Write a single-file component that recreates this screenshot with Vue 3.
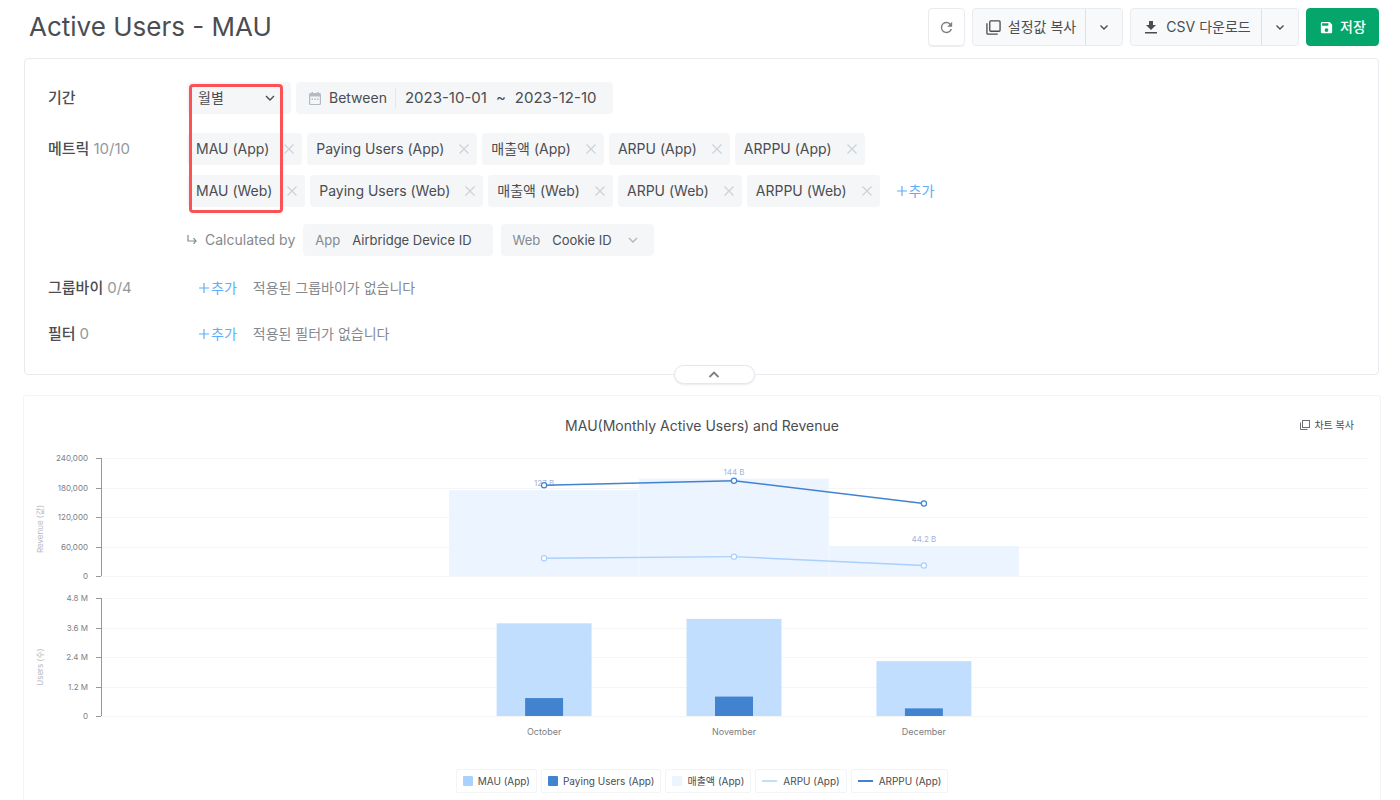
<template>
  <div class="page">
    <header class="top-bar">
      <h1 class="page-title">Active Users - MAU</h1>

      <div class="actions">
        <button type="button" class="btn btn-refresh" aria-label="새로고침">
          <svg width="17" height="17" viewBox="0 0 24 24">
            <path
              fill="#7a7f84"
              d="M17.65 6.35A7.96 7.96 0 0 0 12 4a8 8 0 1 0 7.73 10h-2.08A6 6 0 1 1 12 6c1.66 0 3.14.69 4.22 1.78L13 11h7V4z"
            />
          </svg>
        </button>

        <div class="btn-group">
          <button type="button" class="btn-main copy-main">
            <svg width="15" height="15" viewBox="0 0 16 16" fill="none" stroke="#4a4d51">
              <rect x="4" y="1" width="11" height="11" rx="1" stroke-width="1.4" />
              <path d="M1 3.5V14a1 1 0 0 0 1 1h10.5" stroke-width="1.4" />
            </svg>
            설정값 복사
          </button>
          <button type="button" class="btn-arrow" aria-label="설정값 복사 옵션">
            <svg width="10" height="10" viewBox="0 0 10 10" fill="none" stroke="#4a4d51">
              <path d="M1.5 3.5 5 7l3.5-3.5" stroke-width="1.4" />
            </svg>
          </button>
        </div>

        <div class="btn-group">
          <button type="button" class="btn-main csv-main">
            <svg width="12" height="14" viewBox="0 0 12 14" fill="#4a4d51">
              <path d="M4 1h4v4h3L6 10 1 5h3zM0 12h12v1.5H0z" />
            </svg>
            CSV 다운로드
          </button>
          <button type="button" class="btn-arrow" aria-label="CSV 다운로드 옵션">
            <svg width="10" height="10" viewBox="0 0 10 10" fill="none" stroke="#4a4d51">
              <path d="M1.5 3.5 5 7l3.5-3.5" stroke-width="1.4" />
            </svg>
          </button>
        </div>

        <button type="button" class="btn btn-save">
          <svg width="15" height="15" viewBox="0 0 24 24" fill="#fff">
            <path
              d="M17 3H5a2 2 0 0 0-2 2v14a2 2 0 0 0 2 2h14a2 2 0 0 0 2-2V7zm-5 16a3 3 0 1 1 0-6 3 3 0 0 1 0 6zm3-10H5V5h10z"
            />
          </svg>
          저장
        </button>
      </div>
    </header>

    <section class="filter-box">
      <div class="row">
        <label class="row-label" for="period">기간</label>
        <div class="row-body">
          <div class="period">
            <select id="period" v-model="period">
              <option>월별</option>
              <option>주별</option>
              <option>일별</option>
            </select>
            <svg class="select-arrow" width="10" height="10" viewBox="0 0 10 10" fill="none" stroke="#4a4d51">
              <path d="M1 3l4 4 4-4" stroke-width="1.4" />
            </svg>
          </div>
          <button type="button" class="date-range">
            <svg width="12" height="13" viewBox="0 0 12 13" fill="#b4bbc4">
              <path d="M2.5 0H4v2H2.5zM8 0h1.5v2H8z" />
              <path
                fill-rule="evenodd"
                d="M1.5 1h9A1.5 1.5 0 0 1 12 2.5v9a1.5 1.5 0 0 1-1.5 1.5h-9A1.5 1.5 0 0 1 0 11.5v-9A1.5 1.5 0 0 1 1.5 1zM1.2 4.5v7a.4.4 0 0 0 .4.4h8.8a.4.4 0 0 0 .4-.4v-7z"
              />
              <path d="M2.5 6.5H4V8H2.5zM5.25 6.5h1.5V8h-1.5zM8 6.5h1.5V8H8z" />
            </svg>
            <span class="operator">Between</span>
            <span class="dates">
              <span>{{ range.from }}</span>
              <span>~</span>
              <span>{{ range.to }}</span>
            </span>
          </button>
        </div>
      </div>

      <div class="row row-metrics">
        <div class="row-label">메트릭 <span class="count">10/10</span></div>
        <div class="row-stack">
          <div v-for="(line, i) in metrics" :key="i" class="row-body">
            <span v-for="name in line" :key="name" class="chip">
              {{ name }}
              <button type="button" class="chip-remove" :aria-label="`${name} 삭제`">
                <svg width="10" height="10" viewBox="0 0 10 10" stroke="#cbd2d9">
                  <path d="M.5.5l9 9M9.5.5l-9 9" stroke-width="1.2" />
                </svg>
              </button>
            </span>
            <button v-if="i === metrics.length - 1" type="button" class="add-btn">
              <svg width="10" height="10" viewBox="0 0 10 10" stroke="#5eaefb">
                <path d="M5 0v10M0 5h10" stroke-width="1.2" />
              </svg>
              추가
            </button>
          </div>

          <div class="row-body calculated">
            <svg width="10" height="10" viewBox="0 0 10 10" fill="none" stroke="#85898e">
              <path d="M1 0v6h8M6.5 3.2 9 6 6.5 8.8" stroke-width="1.2" />
            </svg>
            <span class="calc-text">Calculated by</span>
            <div class="id-box id-app">
              <span class="id-kind">App</span>
              <span>Airbridge Device ID</span>
            </div>
            <div class="id-box id-web">
              <label class="id-kind" for="web-id">Web</label>
              <select id="web-id">
                <option>Cookie ID</option>
              </select>
              <svg class="select-arrow" width="10" height="10" viewBox="0 0 10 10" fill="none" stroke="#b0b7bf">
                <path d="M1 3l4 4 4-4" stroke-width="1.4" />
              </svg>
            </div>
          </div>
        </div>
      </div>

      <div v-for="item in emptyRows" :key="item.label" class="row row-empty">
        <div class="row-label">
          {{ item.label }} <span class="count">{{ item.count }}</span>
        </div>
        <div class="row-body">
          <button type="button" class="add-btn">
            <svg width="10" height="10" viewBox="0 0 10 10" stroke="#5eaefb">
              <path d="M5 0v10M0 5h10" stroke-width="1.2" />
            </svg>
            추가
          </button>
          <span class="empty-text">{{ item.text }}</span>
        </div>
      </div>

      <div class="highlight"></div>

      <button type="button" class="collapse" aria-label="접기">
        <svg width="12" height="8" viewBox="0 0 12 8" fill="none" stroke="#7a7f85">
          <path d="M1.5 6 6 1.5 10.5 6" stroke-width="1.8" />
        </svg>
      </button>
    </section>

    <section class="chart-card">
      <div class="chart-head">
        <h2 class="chart-title">MAU(Monthly Active Users) and Revenue</h2>
        <button type="button" class="chart-copy">
          <svg width="10" height="10" viewBox="0 0 10 10" fill="none" stroke="#6a6e73">
            <rect x="2.5" y=".5" width="7" height="7" />
            <path d="M.5 2.5v7h7" />
          </svg>
          차트 복사
        </button>
      </div>

      <div class="plot">
        <svg width="100%" height="290" class="plot-svg">
          <g v-for="panel in panels" :key="panel.title">
            <text
              class="axis-title"
              :transform="`translate(-58 ${panel.titleY}) rotate(-90)`"
              text-anchor="middle"
            >
              {{ panel.title }}
            </text>
            <g v-for="(tick, i) in panel.ticks" :key="tick">
              <line class="grid-line" x1="0" x2="100%" :y1="tickY(panel, i)" :y2="tickY(panel, i)" />
              <line class="axis-line" x1="-5" x2="0" :y1="tickY(panel, i)" :y2="tickY(panel, i)" />
              <text class="tick-label" x="-13" :y="tickY(panel, i) + 3" text-anchor="end">{{ tick }}</text>
            </g>
            <line class="axis-line" x1="0" x2="0" :y1="panel.top" :y2="panel.top + PANEL_HEIGHT" />
          </g>

          <!-- 매출액 -->
          <g v-for="(m, i) in months" :key="m.name">
            <rect
              :x="`${m.center - 7.5}%`"
              width="15%"
              :y="scaleY(revenuePanel, m.revenue, 174.5)"
              :height="barHeight(m.revenue, 174.5)"
              fill="#ebf4ff"
            />
            <line
              v-if="i > 0"
              :x1="`${m.center - 7.5}%`"
              :x2="`${m.center - 7.5}%`"
              :y1="scaleY(revenuePanel, Math.max(m.revenue, months[i - 1].revenue), 174.5)"
              :y2="revenuePanel.top + PANEL_HEIGHT"
              stroke="#f6faff"
            />
            <text
              class="value-label"
              :x="`${m.center}%`"
              :y="scaleY(revenuePanel, m.revenue, 174.5) - 4"
              text-anchor="middle"
            >
              {{ m.revenue }} B
            </text>
          </g>

          <!-- MAU, Paying Users -->
          <g v-for="m in months" :key="m.name">
            <rect
              :x="`${m.center - 3.75}%`"
              width="7.5%"
              :y="scaleY(usersPanel, m.mau, 4.8)"
              :height="barHeight(m.mau, 4.8)"
              fill="#c2deff"
            />
            <rect
              :x="`${m.center - 1.5}%`"
              width="3%"
              :y="scaleY(usersPanel, m.paying, 4.8)"
              :height="barHeight(m.paying, 4.8)"
              fill="#4183cf"
            />
            <text class="month-label" :x="`${m.center}%`" y="285" text-anchor="middle">{{ m.name }}</text>
          </g>

          <!-- ARPU, ARPPU -->
          <g v-for="line in lines" :key="line.key" :stroke="line.color">
            <line
              v-for="i in months.length - 1"
              :key="i"
              :x1="`${months[i - 1].center}%`"
              :y1="scaleY(revenuePanel, months[i - 1][line.key], 240000)"
              :x2="`${months[i].center}%`"
              :y2="scaleY(revenuePanel, months[i][line.key], 240000)"
              stroke-width="1.4"
            />
            <circle
              v-for="m in months"
              :key="m.name"
              :cx="`${m.center}%`"
              :cy="scaleY(revenuePanel, m[line.key], 240000)"
              r="2.6"
              fill="#fff"
              stroke-width="1.2"
            />
          </g>
        </svg>
      </div>

      <div class="legend">
        <button v-for="item in legend" :key="item.name" type="button" class="legend-item">
          <span :class="['swatch', item.shape, item.tone]"></span>
          {{ item.name }}
        </button>
      </div>
    </section>
  </div>
</template>

<script setup>
import { ref } from "vue";

const PANEL_HEIGHT = 118;

const period = ref("월별");
const range = { from: "2023-10-01", to: "2023-12-10" };

const metrics = [
  ["MAU (App)", "Paying Users (App)", "매출액 (App)", "ARPU (App)", "ARPPU (App)"],
  ["MAU (Web)", "Paying Users (Web)", "매출액 (Web)", "ARPU (Web)", "ARPPU (Web)"],
];

const emptyRows = [
  { label: "그룹바이", count: "0/4", text: "적용된 그룹바이가 없습니다" },
  { label: "필터", count: "0", text: "적용된 필터가 없습니다" },
];

const revenuePanel = {
  title: "Revenue (값)",
  top: 8,
  titleY: 79,
  ticks: ["240,000", "180,000", "120,000", "60,000", "0"],
};
const usersPanel = {
  title: "Users (수)",
  top: 148,
  titleY: 217,
  ticks: ["4.8 M", "3.6 M", "2.4 M", "1.2 M", "0"],
};
const panels = [revenuePanel, usersPanel];

// center: 플롯 너비 기준 %, revenue: B, mau / paying: M
const months = [
  { name: "October", center: 35, revenue: 127, mau: 3.77, paying: 0.73, arpu: 36000, arppu: 184500 },
  { name: "November", center: 50, revenue: 144, mau: 3.95, paying: 0.79, arpu: 39400, arppu: 193800 },
  { name: "December", center: 65, revenue: 44.2, mau: 2.23, paying: 0.31, arpu: 21500, arppu: 147600 },
];

const lines = [
  { key: "arpu", color: "#a9d1fd" },
  { key: "arppu", color: "#4183cf" },
];

const legend = [
  { name: "MAU (App)", shape: "square", tone: "light" },
  { name: "Paying Users (App)", shape: "square", tone: "dark" },
  { name: "매출액 (App)", shape: "square", tone: "pale" },
  { name: "ARPU (App)", shape: "dash", tone: "soft" },
  { name: "ARPPU (App)", shape: "dash", tone: "dark" },
];

const barHeight = (value, max) => (value / max) * PANEL_HEIGHT;
const scaleY = (panel, value, max) => panel.top + PANEL_HEIGHT - barHeight(value, max);
const tickY = (panel, i) => panel.top + Math.round((PANEL_HEIGHT / 4) * i);
</script>

<style>
body {
  background: #fff;
}
</style>

<style scoped>
.page {
  display: flex;
  flex-direction: column;
  min-height: 100vh;
  box-sizing: border-box;
  padding-top: 8px;
  font-family: Inter, "Noto Sans CJK KR", sans-serif;
  font-size: 14px;
  line-height: 20px;
  color: #4a4d51;
}

button,
select {
  margin: 0;
  padding: 0;
  border: 0;
  background: none;
  font: inherit;
  color: inherit;
  cursor: pointer;
}

svg {
  flex: none;
}

/* 상단 */
.top-bar {
  display: flex;
  align-items: center;
  justify-content: space-between;
  padding: 0 21px 0 29px;
}

.page-title {
  margin: 0;
  font-size: 26px;
  font-weight: 400;
  line-height: 38px;
}

.actions {
  display: flex;
  gap: 7px;
}

.btn,
.btn-group {
  display: flex;
  align-items: center;
  justify-content: center;
  height: 38px;
  box-sizing: border-box;
  border: 1px solid #e9ebee;
  border-radius: 4px;
}

.btn-refresh {
  width: 37px;
  box-shadow: 0 1px 1px #eceef1;
}

.btn-group {
  background: #f8f9fb;
}

.btn-main,
.btn-arrow {
  display: flex;
  align-items: center;
  justify-content: center;
  height: 100%;
}

.btn-main {
  padding-left: 4px;
}

.copy-main {
  gap: 7px;
  width: 112px;
}

.csv-main {
  gap: 9px;
  width: 130px;
}

.btn-arrow {
  width: 37px;
  border-left: 1px solid #dfe1e4;
}

.btn-save {
  gap: 6px;
  width: 73px;
  border-color: #05a66b;
  background: #05a66b;
  color: #fff;
  font-weight: 500;
}

/* 필터 */
.filter-box {
  position: relative;
  margin: 12px 21px 0 24px;
  padding: 23px 23px 24px;
  border: 1px solid #e8eaef;
  border-radius: 4px;
}

.row {
  display: flex;
}

.row-label {
  width: 139px;
  flex: none;
  font-size: 15px;
  line-height: 32px;
  font-weight: 500;
}

.count {
  font-weight: 400;
  color: #94989d;
}

.row-body {
  display: flex;
  align-items: center;
  gap: 5px;
  min-height: 32px;
}

.row-stack {
  display: flex;
  flex-direction: column;
  gap: 10px;
}

.row-metrics {
  margin: 19px 0 16px;
}

.row-empty + .row-empty {
  margin-top: 14px;
}

.period {
  position: relative;
  width: 104px;
}

.period select {
  width: 100%;
  height: 32px;
  padding-left: 11px;
  border-radius: 4px;
  background: #f5f6f8;
  appearance: none;
}

.period .select-arrow {
  position: absolute;
  top: 11px;
  right: 16px;
  pointer-events: none;
}

.date-range {
  display: flex;
  align-items: center;
  height: 32px;
  padding: 0 17px 0 13px;
  border-radius: 4px;
  background: #f5f6f8;
}

.operator {
  margin-left: 8px;
  padding-right: 8px;
  border-right: 1px solid #e4e6e9;
}

.dates {
  display: flex;
  gap: 9px;
  padding-left: 9px;
  font-size: 15px;
}

.chip {
  display: flex;
  align-items: center;
  gap: 15px;
  height: 32px;
  padding: 0 8px 0 9px;
  border-radius: 4px;
  background: #f5f6f8;
}

.chip-remove {
  display: flex;
}

.add-btn {
  display: flex;
  align-items: center;
  gap: 2px;
  margin-left: 12px;
  color: #5eaefb;
}

.empty-text {
  margin-left: 11px;
  color: #85898e;
}

.calculated {
  gap: 8px;
  margin-top: 7px;
}

.calc-text {
  color: #85898e;
}

.id-box {
  display: flex;
  align-items: center;
  height: 32px;
  border-radius: 4px;
  background: #f5f6f8;
  font-size: 13px;
}

.id-app {
  padding: 0 21px 0 12px;
}

.id-web {
  padding: 0 16px 0 12px;
}

.id-web select {
  margin-right: 16px;
  appearance: none;
}

.id-kind {
  margin-right: 12px;
  color: #85898e;
}

.highlight {
  position: absolute;
  top: 25px;
  left: 164px;
  width: 88px;
  height: 123px;
  border: 3px solid #fb5255;
  border-radius: 4px;
  pointer-events: none;
}

.collapse {
  position: absolute;
  bottom: -10px;
  left: calc(50% + 13px);
  display: flex;
  align-items: center;
  justify-content: center;
  width: 81px;
  height: 19px;
  margin-left: -41px;
  border: 1px solid #e4e7ec;
  border-radius: 10px;
  background: #fff;
  box-shadow: 0 1px 2px #e8ebef;
}

/* 차트 */
.chart-card {
  flex: 1;
  margin: 20px 19px 0 23px;
  border: 1px solid #f3f4f6;
  border-bottom: 0;
  border-radius: 3px 3px 0 0;
}

.chart-head {
  position: relative;
  padding-top: 14px;
}

.chart-title {
  margin: 0;
  font-size: 14px;
  font-weight: 400;
  line-height: 32px;
  text-align: center;
}

.chart-copy {
  position: absolute;
  top: 19px;
  right: 26px;
  display: flex;
  align-items: center;
  gap: 4px;
  font-size: 10px;
}

.plot {
  padding: 8px 13px 0 77px;
}

.plot-svg {
  display: block;
  overflow: visible;
}

.grid-line {
  stroke: #f5f5f6;
  shape-rendering: crispEdges;
}

.axis-line {
  stroke: #96989b;
  shape-rendering: crispEdges;
}

.tick-label {
  font-size: 8px;
  fill: #7c8085;
}

.axis-title {
  font-size: 8px;
  fill: #b4b9c0;
}

.value-label {
  font-size: 8px;
  fill: #a4b4dc;
}

.month-label {
  font-size: 9px;
  fill: #7c8085;
}

.legend {
  display: flex;
  justify-content: center;
  gap: 4px;
  margin-top: 29px;
}

.legend-item {
  display: flex;
  align-items: center;
  gap: 5px;
  height: 24px;
  padding: 0 6px;
  border: 1px solid #f3f4f5;
  border-radius: 2px;
  font-size: 10px;
}

.swatch.square {
  width: 10px;
  height: 10px;
  border-radius: 1px;
}

.swatch.dash {
  width: 15px;
  height: 2px;
  margin-right: 1px;
}

.swatch.light {
  background: #a9d1fd;
}

.swatch.dark {
  background: #4183cf;
}

.swatch.pale {
  background: #ebf4ff;
}

.swatch.soft {
  background: #c2deff;
}
</style>
